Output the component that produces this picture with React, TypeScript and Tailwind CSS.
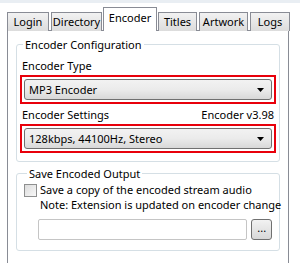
import React from "react";

function Tab({ label, w, active }: { label: string; w: number; active?: boolean }) {
  if (active) {
    return (
      <div
        className="relative z-10 -mx-[1px] flex h-[24px] items-start justify-center border border-b-0 border-[#898c95] bg-white pt-[2px]"
        style={{ width: w }}
      >
        {label}
      </div>
    );
  }
  return (
    <div
      className="flex h-[19px] items-start justify-center border border-b-0 border-[#898c95] bg-gradient-to-b from-[#f2f2f2] to-[#dcdcdc] pt-[1px]"
      style={{ width: w }}
    >
      {label}
    </div>
  );
}

function Combo({ text }: { text: string }) {
  return (
    <div className="border-2 border-[#e8000b] p-[2px]">
      <div className="flex h-[21px] items-center justify-between rounded-[3px] border border-[#707070] bg-gradient-to-b from-[#f2f2f2] via-[#ebebeb] to-[#d8d8d8] pl-[4px] pr-[7px]">
        <span>{text}</span>
        <svg width="7" height="4" viewBox="0 0 7 4">
          <path d="M0 0H7L3.5 4Z" fill="#000" />
        </svg>
      </div>
    </div>
  );
}

export default function App() {
  return (
    <div
      className="h-[263px] w-[300px] overflow-hidden whitespace-nowrap bg-white text-[11px] leading-[15px] text-black"
      style={{ fontFamily: '"Noto Sans", "DejaVu Sans", sans-serif' }}
    >
      <div className="h-[3px] bg-[#e9eef3]" />
      <div className="flex items-end pl-[7px] pt-[4px]">
        <div className="flex items-end gap-[2px]">
          <Tab label="Login" w={42} />
          <Tab label="Directory" w={51} />
          <Tab label="Encoder" w={54} active />
          <Tab label="Titles" w={39} />
          <Tab label="Artwork" w={49} />
          <Tab label="Logs" w={40} />
        </div>
      </div>
      <div className="-mt-[1px] ml-[7px] h-[240px] w-[282px] border border-[#898c95] bg-white px-[8px] pt-[6px]">
        <fieldset className="min-w-0 rounded-[3px] border border-[#d5dfe5] px-[3px] pb-[8px]">
          <legend className="ml-[3px] px-[2px] text-[#000]">Encoder Configuration</legend>
          <div className="mt-[6px] pl-[2px]">Encoder Type</div>
          <div className="mt-[2px]">
            <Combo text="MP3 Encoder" />
          </div>
          <div className="mt-[3px] flex justify-between px-[2px]">
            <span>Encoder Settings</span>
            <span>Encoder v3.98</span>
          </div>
          <div className="mt-[2px]">
            <Combo text="128kbps, 44100Hz, Stereo" />
          </div>
        </fieldset>
        <fieldset className="mt-[4px] min-w-0 rounded-[3px] border border-[#d5dfe5] px-[7px] pb-[10px]">
          <legend className="ml-[3px] px-[2px]">Save Encoded Output</legend>
          <div className="mt-[1px] flex items-start gap-[3px]">
            <div className="mt-[2px] h-[13px] w-[13px] shrink-0 border border-[#8e8f8f] bg-gradient-to-br from-[#dcdcdc] to-[#f8f8f8]" />
            <div>
              <div>Save a copy of the encoded stream audio</div>
              <div>Note: Extension is updated on encoder change</div>
            </div>
          </div>
          <div className="mt-[7px] flex items-center gap-[4px] pl-[14px]">
            <div className="h-[21px] w-[213px] rounded-[2px] border border-[#c5c5c5] bg-white" />
            <div className="flex h-[21px] w-[21px] items-center justify-center rounded-[3px] border border-[#707070] bg-gradient-to-b from-[#f2f2f2] to-[#d8d8d8] pb-[4px]">
              ...
            </div>
          </div>
        </fieldset>
      </div>
    </div>
  );
}
